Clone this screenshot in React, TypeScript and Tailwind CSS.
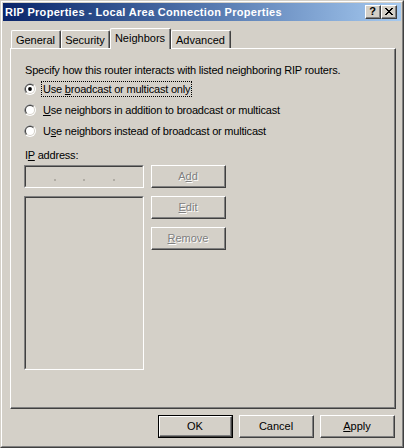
import React from "react";

const font = "font-['Liberation_Sans',Arial,sans-serif]";

function Raised({ children, className = "" }: { children: React.ReactNode; className?: string }) {
  return (
    <div className={`border-t border-l border-t-white border-l-white border-r border-b border-r-[#404040] border-b-[#404040] ${className}`}>
      <div className="w-full h-full border-r border-b border-r-[#808080] border-b-[#808080] flex items-center justify-center">
        {children}
      </div>
    </div>
  );
}

function Btn({ children, disabled = false, isDefault = false }: { children: React.ReactNode; disabled?: boolean; isDefault?: boolean }) {
  const txt = disabled ? "text-[#808080] [text-shadow:1px_1px_0_#ffffff]" : "text-black";
  if (isDefault) {
    return (
      <div className="w-[75px] h-[23px] border border-black">
        <Raised className="w-full h-full">
          <span className={`text-[11px] leading-[13px] ${txt}`}>{children}</span>
        </Raised>
      </div>
    );
  }
  return (
    <Raised className="w-[75px] h-[23px]">
      <span className={`text-[11px] leading-[13px] ${txt}`}>{children}</span>
    </Raised>
  );
}

function Sunken({ children, className = "" }: { children?: React.ReactNode; className?: string }) {
  return (
    <div className={`border-t border-l border-t-[#808080] border-l-[#808080] border-r border-b border-r-white border-b-white ${className}`}>
      <div className="w-full h-full border-t border-l border-t-[#404040] border-l-[#404040] border-r border-b border-r-[#d4d0c8] border-b-[#d4d0c8] bg-[#d4d0c8]">
        {children}
      </div>
    </div>
  );
}

function Radio({ checked }: { checked?: boolean }) {
  return (
    <svg width="12" height="12" viewBox="0 0 12 12" className="shrink-0">
      <circle cx="6" cy="6" r="6" fill="#ffffff" />
      <path d="M10.24 1.76 A6 6 0 0 0 1.76 10.24 Z" fill="#808080" />
      <circle cx="6" cy="6" r="5" fill="#d4d0c8" />
      <path d="M9.54 2.46 A5 5 0 0 0 2.46 9.54 Z" fill="#404040" />
      <circle cx="6" cy="6" r="4" fill="#ffffff" />
      {checked && <circle cx="6" cy="6" r="1.9" fill="#000000" />}
    </svg>
  );
}

function Tab({ label, selected = false, w }: { label: string; selected?: boolean; w: string }) {
  if (selected) {
    return (
      <div className={`relative z-10 -mb-[1px] h-[21px] ${w} bg-[#d4d0c8] border-t border-l border-t-white border-l-white border-r border-r-[#404040] rounded-tl-[2px] rounded-tr-[2px]`}>
        <div className="h-full border-r border-r-[#808080] flex items-start justify-center pt-[3px]">
          <span className="text-[11px] leading-[13px] text-black">{label}</span>
        </div>
      </div>
    );
  }
  return (
    <div className={`h-[18px] ${w} bg-[#d4d0c8] border-t border-l border-t-white border-l-white border-r border-r-[#404040] rounded-tl-[2px] rounded-tr-[2px]`}>
      <div className="h-full border-r border-r-[#808080] flex items-start justify-center pt-[3px]">
        <span className="text-[11px] leading-[13px] text-black">{label}</span>
      </div>
    </div>
  );
}

export default function App() {
  return (
    <div className={`w-[404px] h-[448px] bg-[#d4d0c8] ${font} border-t border-l border-t-[#d4d0c8] border-l-[#d4d0c8] border-r border-b border-r-[#404040] border-b-[#404040]`}>
      <div className="w-full h-full border-t border-l border-t-white border-l-white border-r border-b border-r-[#808080] border-b-[#808080] p-[1px] flex flex-col">
        {/* Title bar */}
        <div className="h-[18px] bg-gradient-to-r from-[#0a246a] to-[#a6caf0] flex items-center pl-[2px] pr-[4px]">
          <span className="text-white font-bold text-[11px] leading-[13px] tracking-[0.3px] whitespace-nowrap">
            RIP Properties - Local Area Connection Properties
          </span>
          <div className="ml-auto flex items-center">
            <Raised className="w-[16px] h-[14px] bg-[#d4d0c8]">
              <span className="text-[11px] font-bold leading-[11px] text-black">?</span>
            </Raised>
            <Raised className="w-[16px] h-[14px] bg-[#d4d0c8]">
              <svg width="8" height="7" viewBox="0 0 8 7" shapeRendering="crispEdges">
                <path
                  d="M0 0h2v1H0zM6 0h2v1H6zM1 1h2v1H1zM5 1h2v1H5zM2 2h4v1H2zM3 3h2v1H3zM2 4h4v1H2zM1 5h2v1H1zM5 5h2v1H5zM0 6h2v1H0zM6 6h2v1H6z"
                  fill="#000"
                />
              </svg>
            </Raised>
          </div>
        </div>

        {/* Tabs */}
        <div className="mt-[7px] h-[20px] flex items-end pl-[8px]">
          <Tab label="General" w="w-[50px]" />
          <Tab label="Security" w="w-[49px]" />
          <Tab label="Neighbors" selected w="w-[61px]" />
          <Tab label="Advanced" w="w-[60px]" />
        </div>

        {/* Panel */}
        <div className="ml-[7px] w-[386px] h-[361px] border-t border-l border-t-white border-l-white border-r border-b border-r-[#404040] border-b-[#404040]">
          <div className="w-full h-full border-r border-b border-r-[#808080] border-b-[#808080] pl-[13px] pt-[15px] flex flex-col text-[11px] leading-[13px] tracking-[-0.2px] text-black">
            <div className="pl-[1px] h-[13px] whitespace-nowrap">
              Specify how this router interacts with listed neighboring RIP routers.
            </div>

            <div className="mt-[4px] h-[16px] flex items-center">
              <Radio checked />
              <span className="ml-[5px] h-[16px] px-[1px] border border-dotted border-black flex items-center whitespace-nowrap">
                Use&nbsp;<span className="underline">b</span>roadcast or multicast only
              </span>
            </div>
            <div className="mt-[5px] h-[16px] flex items-center">
              <Radio />
              <span className="ml-[6px] pl-[1px] whitespace-nowrap">
                <span className="underline">U</span>se neighbors in addition to broadcast or multicast
              </span>
            </div>
            <div className="mt-[5px] h-[16px] flex items-center">
              <Radio />
              <span className="ml-[6px] pl-[1px] whitespace-nowrap">
                U<span className="underline">s</span>e neighbors instead of broadcast or multicast
              </span>
            </div>

            <div className="mt-[10px] pl-[1px] h-[13px]">
              I<span className="underline">P</span> address:
            </div>

            <div className="mt-[3px] flex gap-[7px] tracking-normal">
              <div className="flex flex-col gap-[8px]">
                <Sunken className="w-[120px] h-[23px]">
                  <div className="flex items-start pt-[12px]">
                    <div className="w-[28px]" />
                    <div className="w-[2px] h-[2px] bg-[#b0aca4]" />
                    <div className="w-[27px]" />
                    <div className="w-[2px] h-[2px] bg-[#b0aca4]" />
                    <div className="w-[28px]" />
                    <div className="w-[2px] h-[2px] bg-[#b0aca4]" />
                  </div>
                </Sunken>
                <Sunken className="w-[120px] h-[174px]" />
              </div>
              <div className="flex flex-col gap-[8px]">
                <Btn disabled>A<span className="underline">d</span>d</Btn>
                <Btn disabled><span className="underline">E</span>dit</Btn>
                <Btn disabled><span className="underline">R</span>emove</Btn>
              </div>
            </div>
          </div>
        </div>

        {/* Bottom buttons */}
        <div className="mt-[6px] flex justify-end gap-[6px] pr-[6px]">
          <Btn isDefault>OK</Btn>
          <Btn>Cancel</Btn>
          <Btn><span className="underline">A</span>pply</Btn>
        </div>
      </div>
    </div>
  );
}
